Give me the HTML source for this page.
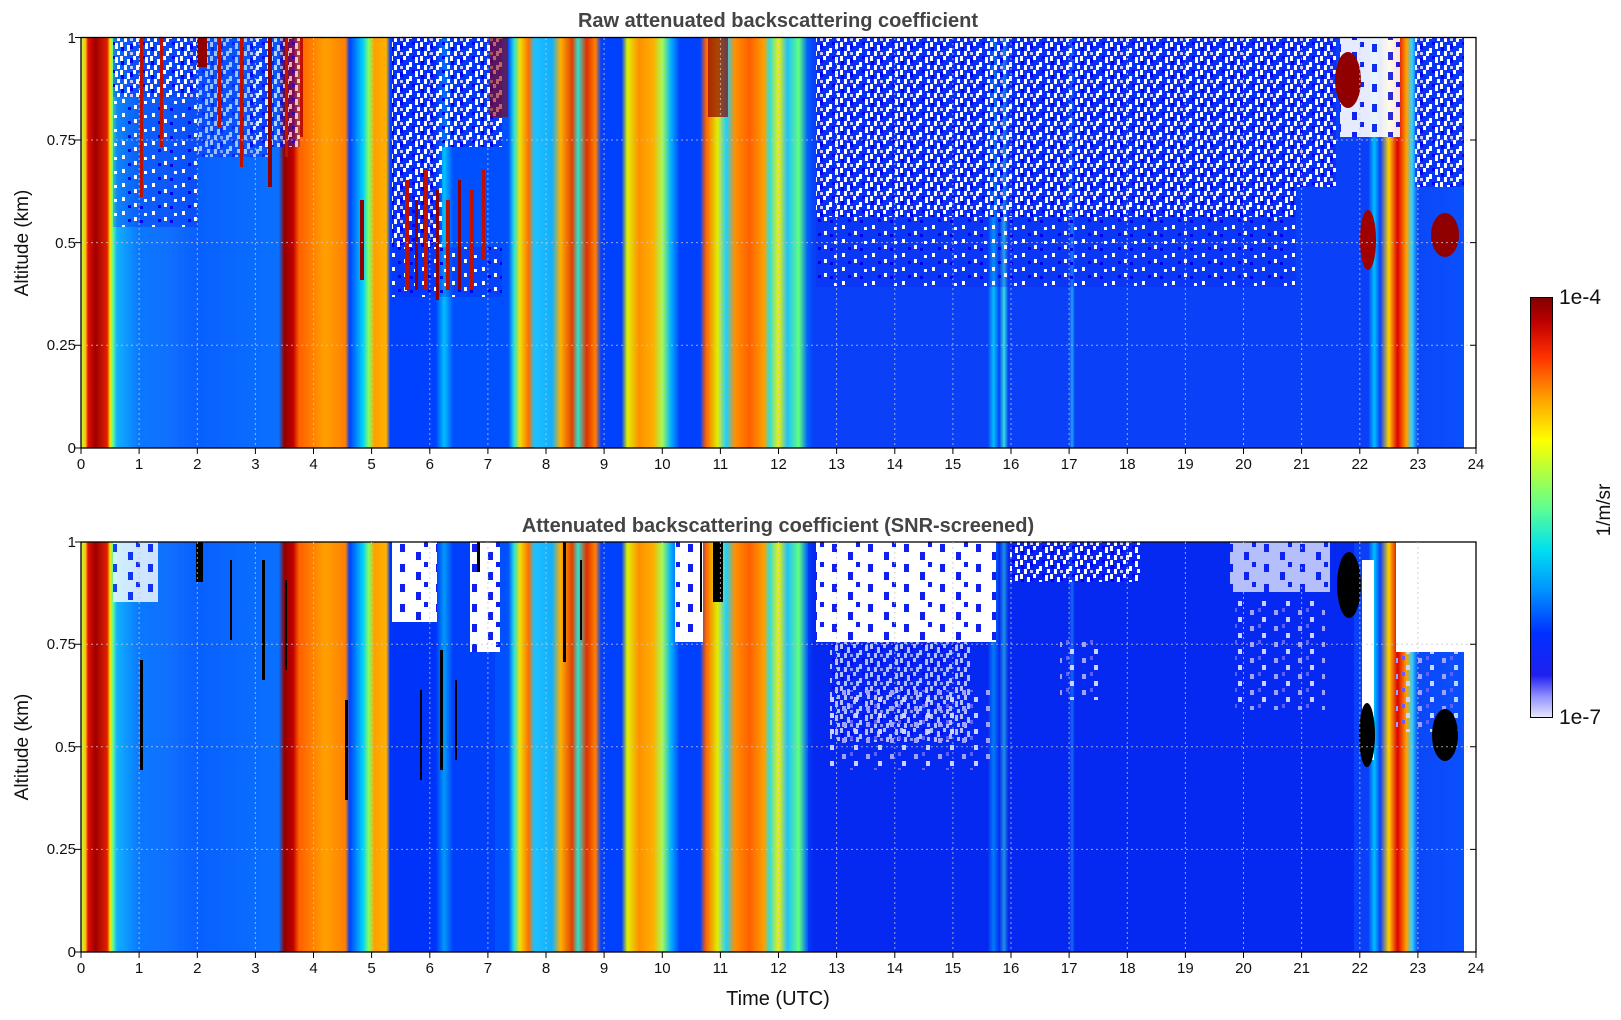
<!DOCTYPE html>
<html><head><meta charset="utf-8"><style>
html,body{margin:0;padding:0;background:#fff;}
svg{display:block;font-family:"Liberation Sans","DejaVu Sans",sans-serif;}
</style></head><body>
<svg width="1621" height="1020" viewBox="0 0 1621 1020" xmlns="http://www.w3.org/2000/svg">
<defs>
<linearGradient id="g" gradientUnits="userSpaceOnUse" x1="81" y1="0" x2="1476" y2="0">
<stop offset="0" stop-color="#c0ff40"/>
<stop offset="0.0033" stop-color="#ffc000"/>
<stop offset="0.005" stop-color="#e01000"/>
<stop offset="0.0104" stop-color="#a00000"/>
<stop offset="0.0188" stop-color="#e02000"/>
<stop offset="0.0208" stop-color="#ffe000"/>
<stop offset="0.0229" stop-color="#60ff90"/>
<stop offset="0.0258" stop-color="#10b0ff"/>
<stop offset="0.0417" stop-color="#0a78ff"/>
<stop offset="0.0625" stop-color="#1070ff"/>
<stop offset="0.0833" stop-color="#0860ff"/>
<stop offset="0.125" stop-color="#0a6cff"/>
<stop offset="0.1417" stop-color="#0a70ff"/>
<stop offset="0.1458" stop-color="#900000"/>
<stop offset="0.1521" stop-color="#c00000"/>
<stop offset="0.1563" stop-color="#ff6000"/>
<stop offset="0.175" stop-color="#ffa000"/>
<stop offset="0.1896" stop-color="#ff8000"/>
<stop offset="0.1925" stop-color="#0040ff"/>
<stop offset="0.2021" stop-color="#00d0ff"/>
<stop offset="0.2063" stop-color="#80ff60"/>
<stop offset="0.2104" stop-color="#ffa000"/>
<stop offset="0.2188" stop-color="#ffb000"/>
<stop offset="0.2217" stop-color="#0040ff"/>
<stop offset="0.2542" stop-color="#0040ff"/>
<stop offset="0.2604" stop-color="#00c0ff"/>
<stop offset="0.2667" stop-color="#0050ff"/>
<stop offset="0.3063" stop-color="#0050ff"/>
<stop offset="0.3104" stop-color="#20e0e0"/>
<stop offset="0.3146" stop-color="#f0e000"/>
<stop offset="0.3208" stop-color="#ff7000"/>
<stop offset="0.325" stop-color="#20c0ff"/>
<stop offset="0.3375" stop-color="#10b0ff"/>
<stop offset="0.3438" stop-color="#ffb000"/>
<stop offset="0.3521" stop-color="#e04000"/>
<stop offset="0.3563" stop-color="#30e0d0"/>
<stop offset="0.3625" stop-color="#e03000"/>
<stop offset="0.3688" stop-color="#ff8000"/>
<stop offset="0.3729" stop-color="#0040ff"/>
<stop offset="0.3875" stop-color="#0040ff"/>
<stop offset="0.3917" stop-color="#e0f000"/>
<stop offset="0.4" stop-color="#ff9000"/>
<stop offset="0.4104" stop-color="#ffb000"/>
<stop offset="0.4167" stop-color="#a0ff50"/>
<stop offset="0.4229" stop-color="#00b0ff"/>
<stop offset="0.4292" stop-color="#0040ff"/>
<stop offset="0.4438" stop-color="#0040ff"/>
<stop offset="0.4479" stop-color="#ff6000"/>
<stop offset="0.4563" stop-color="#e0f000"/>
<stop offset="0.4625" stop-color="#20d0ff"/>
<stop offset="0.4688" stop-color="#ff9000"/>
<stop offset="0.4792" stop-color="#ff6000"/>
<stop offset="0.4896" stop-color="#ffa000"/>
<stop offset="0.4938" stop-color="#30e0e0"/>
<stop offset="0.5" stop-color="#f0f000"/>
<stop offset="0.5063" stop-color="#20c0ff"/>
<stop offset="0.5146" stop-color="#60ff80"/>
<stop offset="0.5208" stop-color="#0060ff"/>
<stop offset="0.525" stop-color="#0a40f8"/>
<stop offset="0.65" stop-color="#0a40f8"/>
<stop offset="0.6542" stop-color="#00c0ff"/>
<stop offset="0.6583" stop-color="#0a40f8"/>
<stop offset="0.6617" stop-color="#30e0e0"/>
<stop offset="0.6646" stop-color="#0a40f8"/>
<stop offset="0.7083" stop-color="#0a40f8"/>
<stop offset="0.7104" stop-color="#20a0ff"/>
<stop offset="0.7125" stop-color="#0a40f8"/>
<stop offset="0.9229" stop-color="#0a40f8"/>
<stop offset="0.9271" stop-color="#00c0ff"/>
<stop offset="0.9313" stop-color="#0a40f8"/>
<stop offset="0.9375" stop-color="#ffd000"/>
<stop offset="0.9438" stop-color="#e00000"/>
<stop offset="0.95" stop-color="#ffa000"/>
<stop offset="0.9542" stop-color="#30d0ff"/>
<stop offset="0.9583" stop-color="#0a48f8"/>
<stop offset="0.9917" stop-color="#0a50ff"/>
</linearGradient>
<pattern id="nz" width="30" height="14" patternUnits="userSpaceOnUse">
<rect width="30" height="14" fill="#0a20f0" opacity="0.5"/>
<rect x="0" y="0" width="3" height="5" fill="#fff"/><rect x="7" y="3" width="3" height="6" fill="#fff"/>
<rect x="13" y="0" width="3" height="4" fill="#fff"/><rect x="19" y="6" width="3" height="5" fill="#fff"/>
<rect x="25" y="1" width="3" height="6" fill="#fff"/><rect x="4" y="9" width="3" height="5" fill="#fff"/>
<rect x="16" y="9" width="3" height="5" fill="#fff"/><rect x="10" y="10" width="3" height="3" fill="#c8c8ff"/>
<rect x="22" y="0" width="3" height="3" fill="#0000f0"/><rect x="27" y="9" width="3" height="4" fill="#fff"/>
<rect x="1" y="5" width="3" height="4" fill="#0000f0"/><rect x="10" y="2" width="3" height="5" fill="#0000f0"/>
</pattern>
<pattern id="nz2" width="30" height="14" patternUnits="userSpaceOnUse">
<rect width="30" height="14" fill="#0a20f0" opacity="0.3"/>
<rect x="2" y="1" width="3" height="4" fill="#fff"/><rect x="14" y="7" width="3" height="4" fill="#fff"/>
<rect x="24" y="3" width="3" height="3" fill="#fff"/><rect x="8" y="9" width="3" height="3" fill="#0000f0"/>
<rect x="20" y="10" width="3" height="3" fill="#0000f0"/>
</pattern>
<pattern id="wz" width="36" height="20" patternUnits="userSpaceOnUse">
<rect width="36" height="20" fill="#fff"/>
<rect x="4" y="4" width="5" height="8" fill="#1020f0"/><rect x="20" y="12" width="5" height="8" fill="#1020f0"/>
<rect x="28" y="2" width="4" height="5" fill="#1020f0"/>
</pattern>
<pattern id="lz" width="24" height="16" patternUnits="userSpaceOnUse">
<rect x="2" y="2" width="4" height="5" fill="#a0a0ff"/><rect x="14" y="9" width="4" height="5" fill="#d0d0ff"/>
<rect x="10" y="0" width="3" height="4" fill="#6060ff"/>
</pattern>
</defs>

<!-- Panel 1 -->
<text x="778" y="27" text-anchor="middle" font-size="20" font-weight="bold" fill="#444">Raw attenuated backscattering coefficient</text>
<rect x="81" y="37" width="1395" height="411" fill="url(#g)"/>
<rect x="1464" y="37" width="12" height="411" fill="#fff"/>
<rect x="113" y="37" width="85" height="60" fill="url(#nz)"/>
<rect x="113" y="97" width="85" height="130" fill="url(#nz2)"/>
<rect x="198" y="37" width="72" height="120" fill="url(#nz)" opacity="0.6"/>
<rect x="250" y="37" width="50" height="110" fill="url(#nz)" opacity="0.7"/>
<rect x="392" y="37" width="50" height="210" fill="url(#nz)"/>
<rect x="392" y="247" width="110" height="50" fill="url(#nz2)"/>
<rect x="442" y="37" width="60" height="110" fill="url(#nz)"/>
<rect x="816" y="37" width="480" height="180" fill="url(#nz)"/>
<rect x="816" y="217" width="480" height="70" fill="url(#nz2)"/>
<rect x="1296" y="37" width="40" height="150" fill="url(#nz)"/>
<rect x="1415" y="37" width="49" height="150" fill="url(#nz)"/>
<rect x="1340" y="37" width="60" height="100" fill="url(#wz)" opacity="0.9"/>
<!-- red streaks -->
<g fill="#c01000">
<rect x="405" y="180" width="4" height="110"/><rect x="415" y="200" width="3" height="90" fill="#900000"/>
<rect x="424" y="170" width="4" height="120"/><rect x="436" y="190" width="3" height="110" fill="#900000"/>
<rect x="446" y="200" width="4" height="90"/><rect x="458" y="180" width="3" height="110" fill="#900000"/>
<rect x="470" y="190" width="4" height="100"/><rect x="482" y="170" width="3" height="90"/>
<rect x="360" y="200" width="4" height="80" fill="#900000"/>
<rect x="140" y="37" width="3" height="160"/><rect x="160" y="37" width="3" height="110"/>
<rect x="240" y="37" width="3" height="130"/><rect x="268" y="37" width="4" height="150" fill="#900000"/>
<rect x="285" y="37" width="3" height="120"/><rect x="218" y="37" width="3" height="90"/>
<rect x="300" y="37" width="3" height="100"/>
</g>
<rect x="490" y="37" width="18" height="80" fill="#900000" opacity="0.6"/>
<rect x="708" y="37" width="20" height="80" fill="#900000" opacity="0.7"/>
<rect x="197" y="37" width="10" height="30" fill="#900000"/>
<ellipse cx="1348" cy="80" rx="13" ry="28" fill="#900000"/>
<ellipse cx="1368" cy="240" rx="8" ry="30" fill="#a00000"/>
<ellipse cx="1445" cy="235" rx="14" ry="22" fill="#900000"/>
<g stroke="#c8c8c8" stroke-width="1" stroke-dasharray="2,3" opacity="0.8">
<line x1="81" y1="345.3" x2="1476" y2="345.3"/><line x1="81" y1="242.6" x2="1476" y2="242.6"/><line x1="81" y1="140" x2="1476" y2="140"/>
</g>
<rect x="81" y="37.5" width="1395" height="410.5" fill="none" stroke="#000" stroke-width="1.3"/>

<!-- Panel 2 -->
<text x="778" y="532" text-anchor="middle" font-size="20" font-weight="bold" fill="#444">Attenuated backscattering coefficient (SNR-screened)</text>
<rect x="81" y="542" width="1395" height="410" fill="url(#g)"/>
<rect x="808" y="542" width="546" height="410" fill="#0000e8" opacity="0.35"/>
<rect x="389" y="542" width="106" height="410" fill="#0000e8" opacity="0.2"/>
<rect x="1464" y="542" width="12" height="410" fill="#fff"/>
<rect x="113" y="542" width="45" height="60" fill="url(#wz)" opacity="0.8"/>
<rect x="392" y="542" width="45" height="80" fill="url(#wz)"/>
<rect x="470" y="542" width="30" height="110" fill="url(#wz)"/>
<rect x="675" y="542" width="28" height="100" fill="url(#wz)"/>
<rect x="816" y="542" width="180" height="100" fill="url(#wz)"/>
<rect x="830" y="642" width="140" height="100" fill="url(#nz)" opacity="0.7"/>
<rect x="830" y="690" width="160" height="80" fill="url(#lz)"/>
<rect x="1010" y="542" width="130" height="40" fill="url(#nz)"/>
<rect x="1230" y="542" width="100" height="50" fill="url(#wz)" opacity="0.7"/>
<rect x="1235" y="600" width="90" height="110" fill="url(#lz)"/>
<rect x="1060" y="640" width="40" height="60" fill="url(#lz)"/>
<rect x="1362" y="560" width="12" height="200" fill="#fff"/>
<rect x="1396" y="542" width="68" height="110" fill="#fff"/>
<rect x="1396" y="652" width="68" height="80" fill="url(#lz)"/>
<ellipse cx="1349" cy="585" rx="12" ry="33" fill="#000"/>
<ellipse cx="1367" cy="735" rx="8" ry="32" fill="#000"/>
<ellipse cx="1445" cy="735" rx="13" ry="26" fill="#000"/>
<rect x="713" y="542" width="10" height="60" fill="#000"/>
<rect x="196" y="542" width="7" height="40" fill="#000"/>
<g fill="#000">
<rect x="563" y="542" width="3" height="120"/><rect x="262" y="560" width="3" height="120"/>
<rect x="140" y="660" width="3" height="110"/><rect x="345" y="700" width="3" height="100"/>
<rect x="440" y="650" width="3" height="120"/><rect x="477" y="542" width="3" height="30"/>
<rect x="230" y="560" width="2" height="80"/><rect x="285" y="580" width="2" height="90"/>
<rect x="420" y="690" width="2" height="90"/><rect x="455" y="680" width="2" height="80"/>
<rect x="580" y="560" width="2" height="80"/><rect x="700" y="542" width="2" height="70"/>
</g>
<g stroke="#c8c8c8" stroke-width="1" stroke-dasharray="2,3" opacity="0.8">
<line x1="81" y1="849.4" x2="1476" y2="849.4"/><line x1="81" y1="746.8" x2="1476" y2="746.8"/><line x1="81" y1="644.3" x2="1476" y2="644.3"/>
</g>
<rect x="81" y="542" width="1395" height="410" fill="none" stroke="#000" stroke-width="1.3"/>

<g id="vg" stroke="#c8c8c8" stroke-width="1" stroke-dasharray="2,3" opacity="0.8">
<line x1="139.1" y1="38" x2="139.1" y2="448"/><line x1="197.3" y1="38" x2="197.3" y2="448"/><line x1="255.4" y1="38" x2="255.4" y2="448"/><line x1="313.5" y1="38" x2="313.5" y2="448"/><line x1="371.6" y1="38" x2="371.6" y2="448"/><line x1="429.8" y1="38" x2="429.8" y2="448"/><line x1="487.9" y1="38" x2="487.9" y2="448"/><line x1="546" y1="38" x2="546" y2="448"/><line x1="604.1" y1="38" x2="604.1" y2="448"/><line x1="662.3" y1="38" x2="662.3" y2="448"/><line x1="720.4" y1="38" x2="720.4" y2="448"/><line x1="778.5" y1="38" x2="778.5" y2="448"/><line x1="836.6" y1="38" x2="836.6" y2="448"/><line x1="894.8" y1="38" x2="894.8" y2="448"/><line x1="952.9" y1="38" x2="952.9" y2="448"/><line x1="1011" y1="38" x2="1011" y2="448"/><line x1="1069.1" y1="38" x2="1069.1" y2="448"/><line x1="1127.3" y1="38" x2="1127.3" y2="448"/><line x1="1185.4" y1="38" x2="1185.4" y2="448"/><line x1="1243.5" y1="38" x2="1243.5" y2="448"/><line x1="1301.6" y1="38" x2="1301.6" y2="448"/><line x1="1359.8" y1="38" x2="1359.8" y2="448"/><line x1="1417.9" y1="38" x2="1417.9" y2="448"/>
</g>
<use href="#vg" transform="translate(0,504)"/>

<g font-size="15" fill="#111" text-anchor="middle">
<g id="xl">
<text x="81" y="469">0</text><text x="139.1" y="469">1</text><text x="197.3" y="469">2</text><text x="255.4" y="469">3</text><text x="313.5" y="469">4</text><text x="371.6" y="469">5</text><text x="429.8" y="469">6</text><text x="487.9" y="469">7</text><text x="546" y="469">8</text><text x="604.1" y="469">9</text><text x="662.3" y="469">10</text><text x="720.4" y="469">11</text><text x="778.5" y="469">12</text><text x="836.6" y="469">13</text><text x="894.8" y="469">14</text><text x="952.9" y="469">15</text><text x="1011" y="469">16</text><text x="1069.1" y="469">17</text><text x="1127.3" y="469">18</text><text x="1185.4" y="469">19</text><text x="1243.5" y="469">20</text><text x="1301.6" y="469">21</text><text x="1359.8" y="469">22</text><text x="1417.9" y="469">23</text><text x="1476" y="469">24</text>
</g>
<g transform="translate(0,504)">
<text x="81" y="469">0</text><text x="139.1" y="469">1</text><text x="197.3" y="469">2</text><text x="255.4" y="469">3</text><text x="313.5" y="469">4</text><text x="371.6" y="469">5</text><text x="429.8" y="469">6</text><text x="487.9" y="469">7</text><text x="546" y="469">8</text><text x="604.1" y="469">9</text><text x="662.3" y="469">10</text><text x="720.4" y="469">11</text><text x="778.5" y="469">12</text><text x="836.6" y="469">13</text><text x="894.8" y="469">14</text><text x="952.9" y="469">15</text><text x="1011" y="469">16</text><text x="1069.1" y="469">17</text><text x="1127.3" y="469">18</text><text x="1185.4" y="469">19</text><text x="1243.5" y="469">20</text><text x="1301.6" y="469">21</text><text x="1359.8" y="469">22</text><text x="1417.9" y="469">23</text><text x="1476" y="469">24</text>
</g>
</g>
<g font-size="15" fill="#111" text-anchor="end">
<text x="76" y="43">1</text><text x="76" y="145">0.75</text><text x="76" y="248">0.5</text><text x="76" y="350">0.25</text><text x="76" y="453">0</text>
<text x="76" y="547">1</text><text x="76" y="649">0.75</text><text x="76" y="752">0.5</text><text x="76" y="854">0.25</text><text x="76" y="957">0</text>
</g>
<g stroke="#000" stroke-width="1">
<path d="M81 448v6M139.1 448v6M197.3 448v6M255.4 448v6M313.5 448v6M371.6 448v6M429.8 448v6M487.9 448v6M546 448v6M604.1 448v6M662.3 448v6M720.4 448v6M778.5 448v6M836.6 448v6M894.8 448v6M952.9 448v6M1011 448v6M1069.1 448v6M1127.3 448v6M1185.4 448v6M1243.5 448v6M1301.6 448v6M1359.8 448v6M1417.9 448v6M1476 448v6"/>
<path transform="translate(0,504)" d="M81 448v6M139.1 448v6M197.3 448v6M255.4 448v6M313.5 448v6M371.6 448v6M429.8 448v6M487.9 448v6M546 448v6M604.1 448v6M662.3 448v6M720.4 448v6M778.5 448v6M836.6 448v6M894.8 448v6M952.9 448v6M1011 448v6M1069.1 448v6M1127.3 448v6M1185.4 448v6M1243.5 448v6M1301.6 448v6M1359.8 448v6M1417.9 448v6M1476 448v6"/>
<path d="M75 37.5h6M75 140h6M75 242.6h6M75 345.3h6M75 448h6M1470 140h6M1470 242.6h6M1470 345.3h6"/>
<path d="M75 542h6M75 644.3h6M75 746.8h6M75 849.4h6M75 952h6M1470 644.3h6M1470 746.8h6M1470 849.4h6"/>
</g>
<text transform="translate(28,243) rotate(-90)" text-anchor="middle" font-size="19" fill="#111">Altitude (km)</text>
<text transform="translate(28,747) rotate(-90)" text-anchor="middle" font-size="19" fill="#111">Altitude (km)</text>
<text x="778" y="1005" text-anchor="middle" font-size="20" fill="#111">Time (UTC)</text>

<defs>
<linearGradient id="cb" x1="0" y1="1" x2="0" y2="0">
<stop offset="0" stop-color="#e8e8ff"/>
<stop offset="0.05" stop-color="#9090ff"/>
<stop offset="0.1" stop-color="#2020f0"/>
<stop offset="0.2" stop-color="#0030ff"/>
<stop offset="0.3" stop-color="#0090ff"/>
<stop offset="0.4" stop-color="#00e0f0"/>
<stop offset="0.5" stop-color="#60ff90"/>
<stop offset="0.6" stop-color="#c0ff30"/>
<stop offset="0.66" stop-color="#ffff00"/>
<stop offset="0.76" stop-color="#ffa000"/>
<stop offset="0.86" stop-color="#ff3000"/>
<stop offset="0.94" stop-color="#c00000"/>
<stop offset="1" stop-color="#800000"/>
</linearGradient>
</defs>
<rect x="1530.5" y="297.5" width="22" height="420" fill="url(#cb)" stroke="#000" stroke-width="1"/>
<text x="1559" y="304" font-size="21" fill="#111">1e-4</text>
<text x="1559" y="724" font-size="21" fill="#111">1e-7</text>
<text transform="translate(1610,510) rotate(-90)" text-anchor="middle" font-size="19" fill="#111">1/m/sr</text>
</svg>
</body></html>
